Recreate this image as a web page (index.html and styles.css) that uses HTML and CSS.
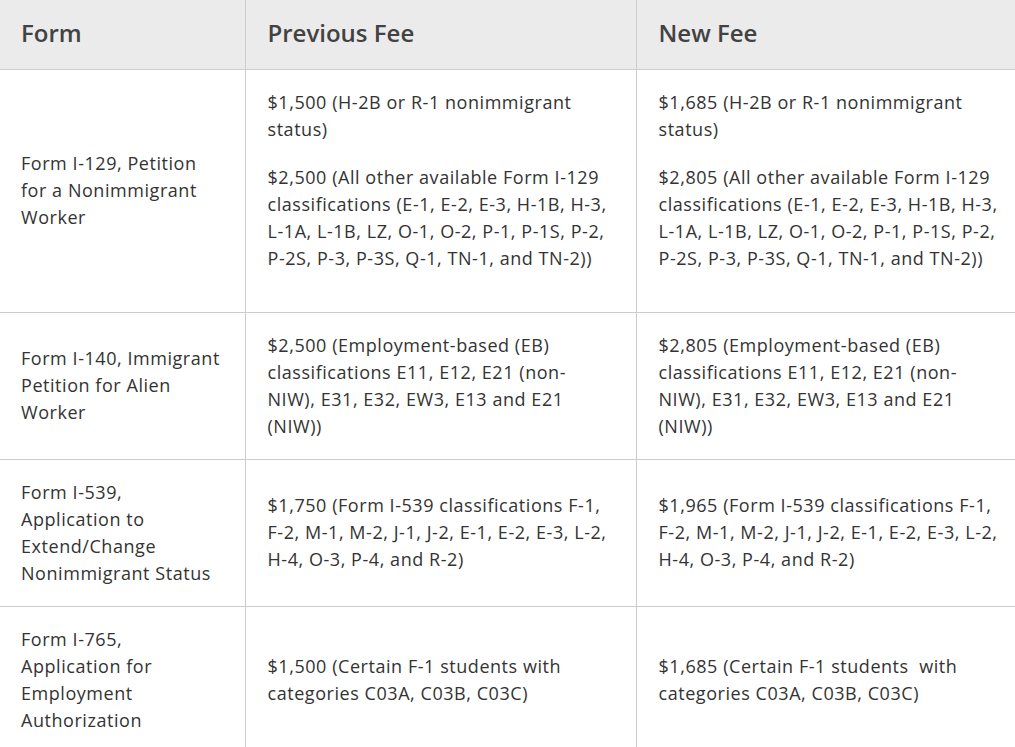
FILE: index.html
```html
<!DOCTYPE html>
<html lang="en">
<head>
<meta charset="utf-8">
<title>Fee Table</title>
<link rel="stylesheet" href="styles.css">
</head>
<body>
<table class="fees">
  <colgroup>
    <col class="c-form">
    <col class="c-fee">
    <col class="c-fee">
  </colgroup>
  <thead>
    <tr>
      <th>Form</th>
      <th>Previous Fee</th>
      <th>New Fee</th>
    </tr>
  </thead>
  <tbody>
    <tr>
      <td>Form I-129, Petition for a Nonimmigrant Worker</td>
      <td>
        <p>$1,500 (H-2B or R-1 nonimmigrant status)</p>
        <p>$2,500 (All other available Form I-129 classifications (E-1, E-2, E-3, H-1B, H-3, L-1A, L-1B, LZ, O-1, O-2, P-1, P-1S, P-2, P-2S, P-3, P-3S, Q-1, TN-1, and TN-2))</p>
      </td>
      <td>
        <p>$1,685 (H-2B or R-1 nonimmigrant status)</p>
        <p>$2,805 (All other available Form I-129 classifications (E-1, E-2, E-3, H-1B, H-3, L-1A, L-1B, LZ, O-1, O-2, P-1, P-1S, P-2, P-2S, P-3, P-3S, Q-1, TN-1, and TN-2))</p>
      </td>
    </tr>
    <tr>
      <td>Form I-140, Immigrant Petition for Alien Worker</td>
      <td>$2,500 (Employment-based (EB) classifications E11, E12, E21 (non-NIW), E31, E32, EW3, E13 and E21 (NIW))</td>
      <td>$2,805 (Employment-based (EB) classifications E11, E12, E21 (non-NIW), E31, E32, EW3, E13 and E21 (NIW))</td>
    </tr>
    <tr>
      <td>Form I-539, Application to Extend/Change Nonimmigrant Status</td>
      <td>$1,750 (Form I-539 classifications F-1, F-2, M-1, M-2, J-1, J-2, E-1, E-2, E-3, L-2, H-4, O-3, P-4, and R-2)</td>
      <td>$1,965 (Form I-539 classifications F-1, F-2, M-1, M-2, J-1, J-2, E-1, E-2, E-3, L-2, H-4, O-3, P-4, and R-2)</td>
    </tr>
    <tr>
      <td>Form I-765, Application for Employment Authorization</td>
      <td>$1,500 (Certain F-1 students with categories C03A, C03B, C03C)</td>
      <td>$1,685 (Certain F-1 students&nbsp; with categories C03A, C03B, C03C)</td>
    </tr>
  </tbody>
</table>
</body>
</html>
```

FILE: styles.css
```css
html, body {
  margin: 0;
  padding: 0;
  background: #ffffff;
  overflow: hidden;
}

.fees {
  border-collapse: collapse;
  table-layout: fixed;
  width: 1026px;
  font-family: "Open Sans", "Noto Sans", sans-serif;
  font-size: 18px;
  line-height: 27px;
  letter-spacing: 0.55px;
  color: #333333;
}

.c-form { width: 245px; }
.c-fee { width: 391px; }

.fees th,
.fees td {
  border-right: 1px solid #cccccc;
  border-bottom: 1px solid #cccccc;
  padding: 19px 22px 19px 22px;
  vertical-align: middle;
  text-align: left;
}

.fees th:first-child,
.fees td:first-child {
  padding-left: 21px;
}

.fees th:last-child,
.fees td:last-child {
  border-right: none;
  padding-right: 26px;
}

.fees thead th {
  background: #ebebeb;
  color: #424242;
  font-weight: 600;
  font-size: 24px;
  line-height: 30px;
  letter-spacing: 0;
  height: 69px;
  padding-top: 0;
  padding-bottom: 3px;
  box-sizing: border-box;
}

.fees p {
  margin: 0 0 21px 0;
}
```
